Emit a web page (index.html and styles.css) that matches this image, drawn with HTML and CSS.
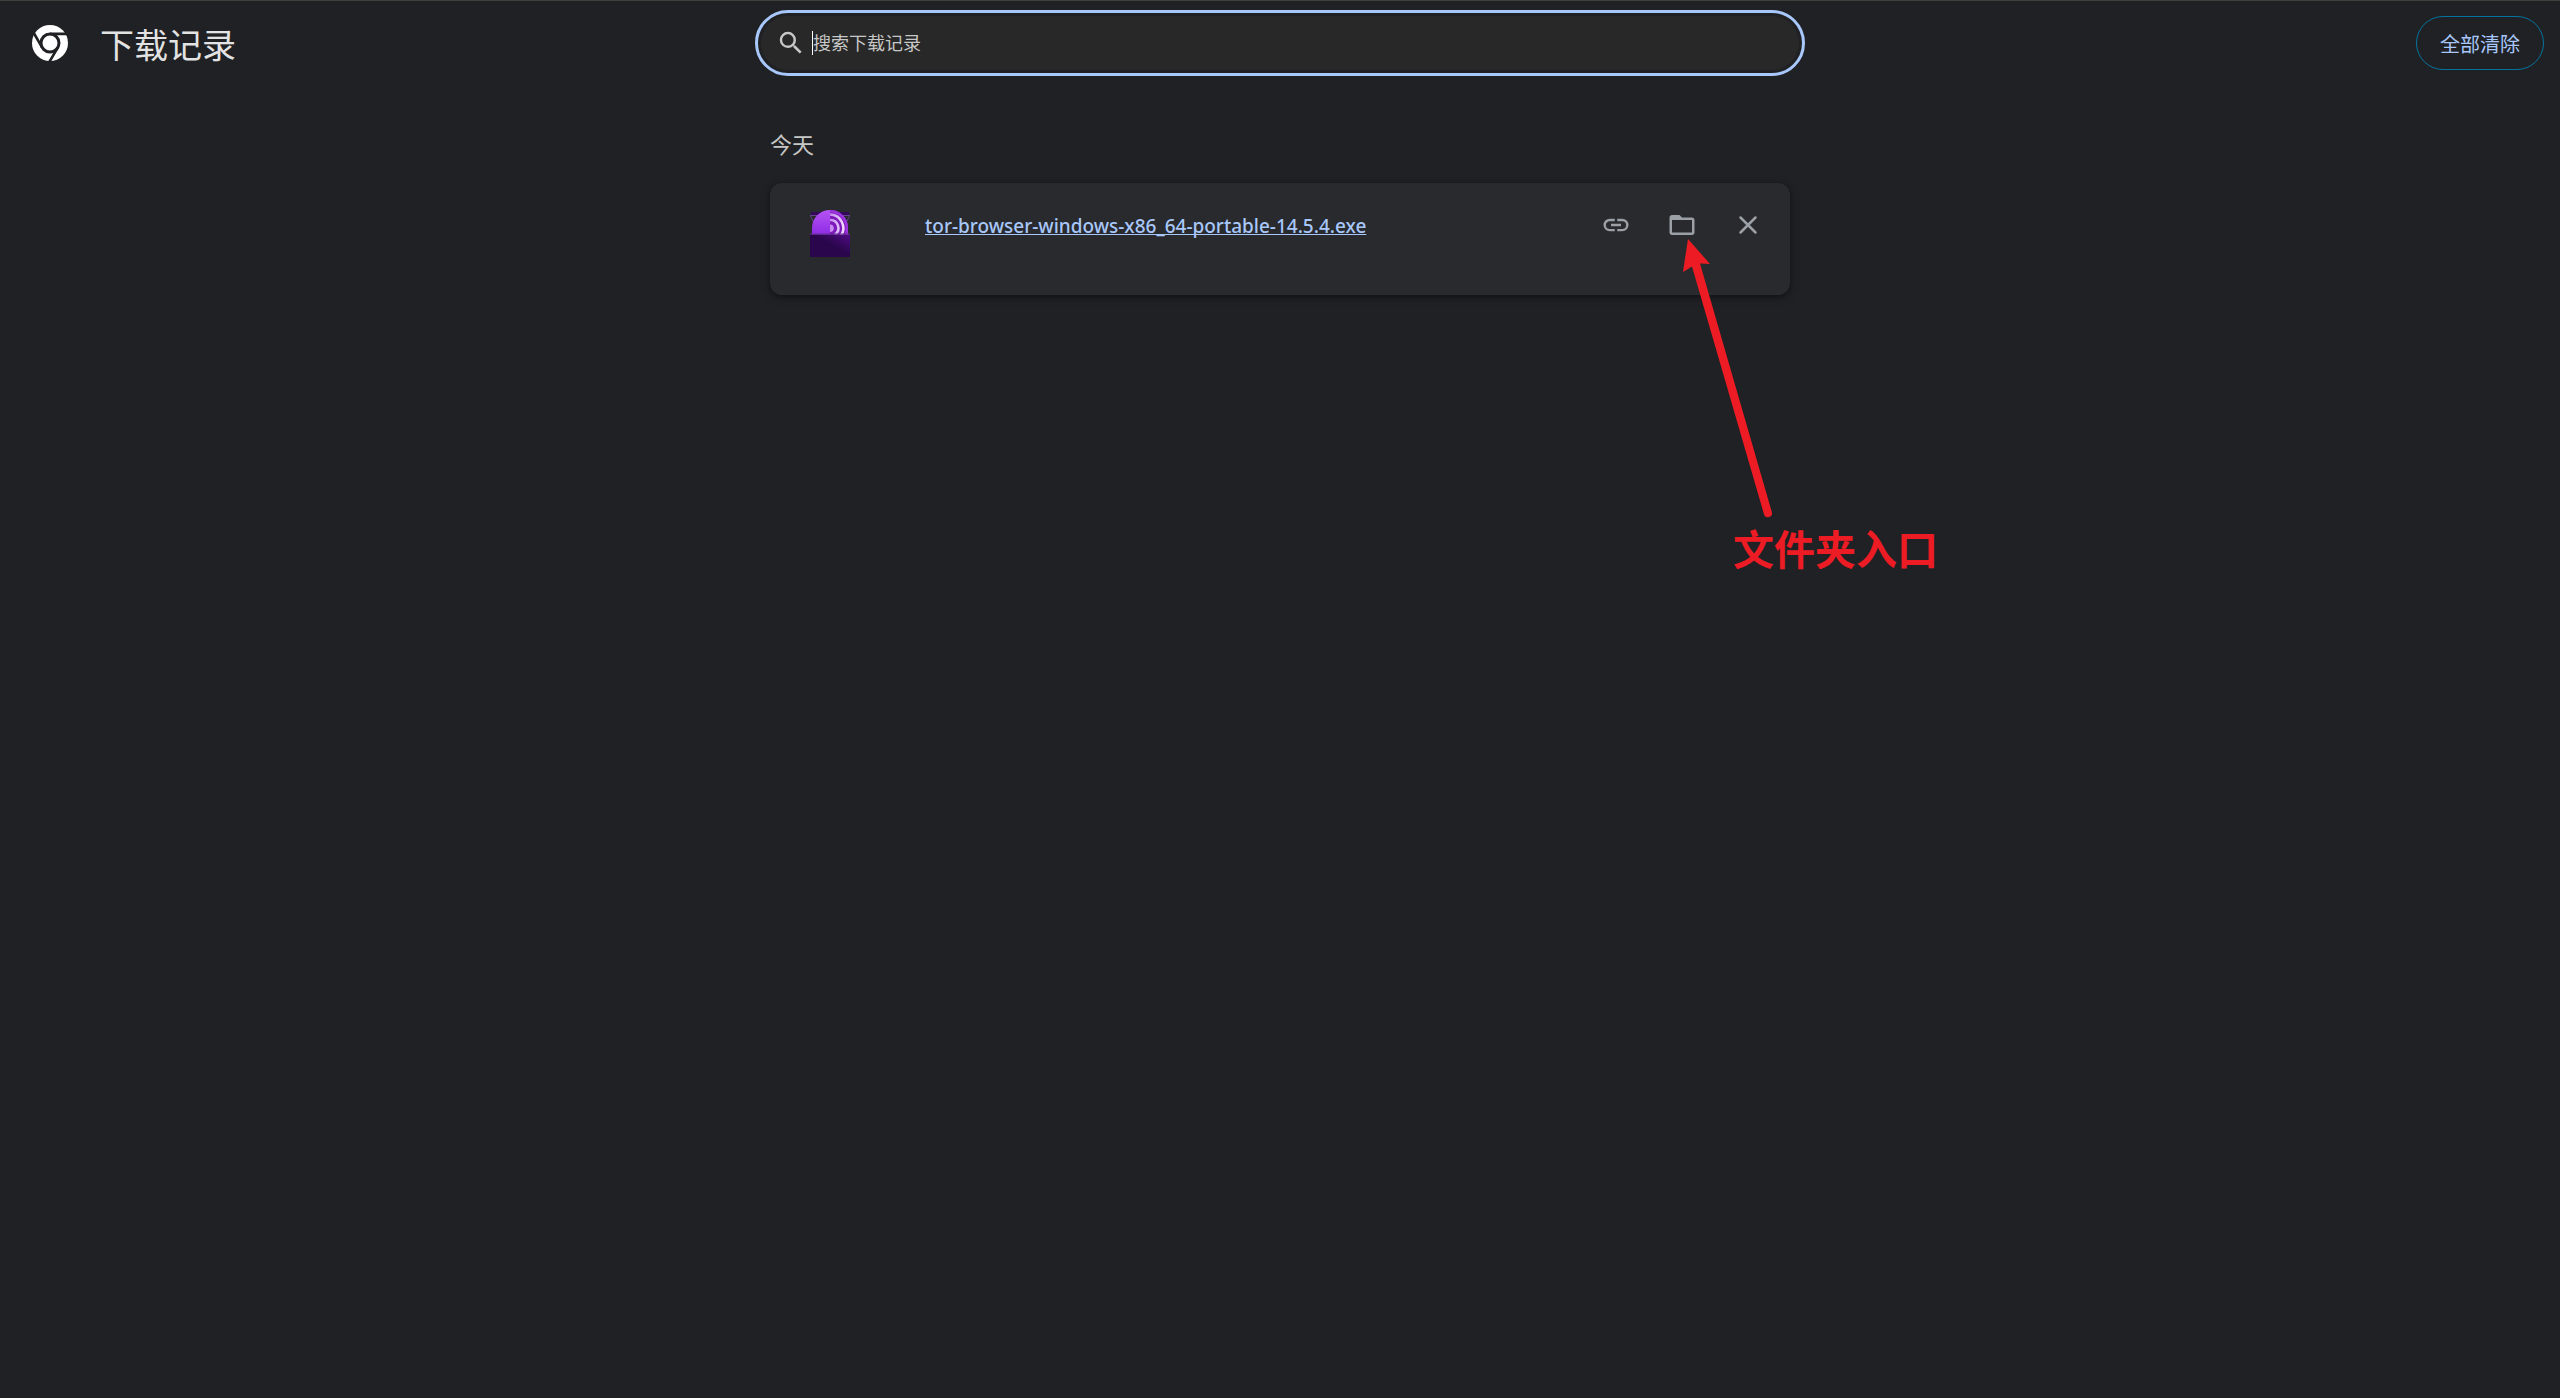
FILE: index.html
```html
<!DOCTYPE html>
<html lang="zh-CN">
<head>
<meta charset="utf-8">
<meta name="viewport" content="width=device-width, initial-scale=1">
<title>下载记录</title>
<link rel="stylesheet" href="styles.css">
</head>
<body>
<header class="toolbar">
  <div class="brand">
    <svg class="brand-logo" viewBox="0 0 36 36" aria-hidden="true">
      <circle cx="18" cy="18" r="18" fill="#fff"/>
      <circle cx="18" cy="18" r="9" fill="none" stroke="#202124" stroke-width="3"/>
      <path d="M18 8.9H35M10.2 22.6L1.8 8M25.8 22.6L17.3 37" fill="none" stroke="#202124" stroke-width="2.6"/>
    </svg>
    <h1 class="brand-title">下载记录</h1>
  </div>
  <div class="search">
    <div class="search-field">
      <svg class="search-icon" viewBox="0 0 24 24" aria-hidden="true"><path fill="currentColor" d="M15.5 14h-.79l-.28-.27A6.47 6.47 0 0 0 16 9.5 6.5 6.5 0 1 0 9.5 16c1.61 0 3.09-.59 4.23-1.57l.27.28v.79l5 4.99L20.49 19l-4.99-5zm-6 0C7.01 14 5 11.99 5 9.5S7.01 5 9.5 5 14 7.01 14 9.5 11.99 14 9.5 14z"/></svg>
      <span class="caret"></span>
      <input class="search-input" type="text" placeholder="搜索下载记录" aria-label="搜索下载记录">
    </div>
  </div>
  <div class="actions"><button class="clear-all" type="button">全部清除</button></div>
</header>
<main class="downloads">
  <h2 class="date">今天</h2>
  <article class="card">
    <svg class="file-icon" viewBox="0 0 40 48" aria-hidden="true">
      <defs>
        <linearGradient id="onion" x1="0" y1="0" x2="0" y2="1"><stop offset="0" stop-color="#b653f4"/><stop offset="1" stop-color="#8c2be4"/></linearGradient>
        <linearGradient id="box" x1="0" y1="1" x2="1" y2="0"><stop offset=".55" stop-color="#2a064d"/><stop offset="1" stop-color="#530b86"/></linearGradient>
        <linearGradient id="ring" x1="0" y1="0" x2="1" y2="0"><stop offset="0" stop-color="#c58bee"/><stop offset="1" stop-color="#f0d8ff"/></linearGradient>
      </defs>
      <path d="M1 2h38v4H1z" fill="#35075c"/>
      <path d="M0 5.5h40M.5 6l3 6v13M39.5 6l-3 6v13" fill="none" stroke="#64438a"/>
      <path d="M2 25V18a18 18 0 0 1 36 0v7z" fill="url(#onion)"/>
      <path d="M20 0a18 18 0 0 1 18 18v7H20z" fill="#7d19bb"/>
      <path d="M20 1.2a16.8 16.8 0 0 1 16.8 16.8v7" fill="none" stroke="#9c35df" stroke-width="2.4"/>
      <path d="M20 4.500a13.5 13.5 0 0 1 11 21M20 10a8 8 0 0 1 5 14.5" fill="none" stroke="url(#ring)" stroke-width="2.6"/>
      <path d="M20 14.500a3.8 3.8 0 0 1 0 7.600z" fill="#c58bee"/>
      <path d="M0 24.500h40V47H0z" fill="url(#box)"/>
      <path d="M0 24h40" stroke="#64348d"/>
    </svg>
    <div class="file-info"><a class="file-name" href="#">tor-browser-windows-x86_64-portable-14.5.4.exe</a></div>
    <div class="card-actions">
      <button class="icon-button" type="button" aria-label="复制下载链接"><svg class="icon" viewBox="0 0 24 24"><path fill="currentColor" d="M3.9 12c0-1.71 1.39-3.1 3.1-3.1h4V7H7a5 5 0 0 0 0 10h4v-1.900H7A3.100 3.100 0 0 1 3.900 12zM8 13h8v-2H8v2zm9-6h-4v1.900h4a3.100 3.100 0 0 1 0 6.200h-4V17h4a5 5 0 0 0 0-10z"/></svg></button>
      <button class="icon-button" type="button" aria-label="在文件夹中显示"><svg class="icon" viewBox="0 0 24 24"><path fill="currentColor" d="M20 6h-8l-2-2H4c-1.1 0-2 .9-2 2v12c0 1.1.9 2 2 2h16c1.1 0 2-.9 2-2V8c0-1.100-.9-2-2-2zm0 12H4V8h16v10z"/></svg></button>
      <button class="icon-button" type="button" aria-label="从列表中移除"><svg class="icon" viewBox="0 0 24 24"><path d="M6 6l12 12M18 6L6 18" fill="none" stroke="currentColor" stroke-width="2" stroke-linecap="round"/></svg></button>
    </div>
    <div class="note">
      <svg class="note-arrow" viewBox="0 0 100 282" aria-hidden="true">
        <path d="M5 1L27 26 17 25.500 88.800 274a4 4 0 0 1-7.800 2.200L9 28.500 0 34z" fill="#ed1c24"/>
      </svg>
      <span class="note-text">文件夹入口</span>
    </div>
  </article>
</main>
</body>
</html>
```
FILE: styles.css
```css
* {
  box-sizing: border-box;
}

body {
  margin: 0;
  min-height: 100vh;
  border-top: 1px solid #3c403c;
  background: #202124;
  color: #e3e3e3;
  font-family: "Noto Sans", "Noto Sans CJK SC", sans-serif;
}

button,
input {
  font-family: inherit;
}

.toolbar {
  display: grid;
  grid-template-columns: 1fr minmax(0, 1050px) 1fr;
  align-items: center;
  padding: 9px 16px;
}

.brand {
  display: flex;
  align-items: center;
  gap: 32px;
  min-width: 0;
  padding-left: 16px;
}

.brand-logo {
  width: 36px;
  height: 36px;
  flex: none;
}

.brand-title {
  margin: 0;
  padding-top: 4px;
  font-size: 34px;
  font-weight: 400;
  line-height: 48px;
  white-space: nowrap;
}

.search {
  padding: 3px;
  border: 3px solid #a8c7fa;
  border-radius: 33px;
}

.search-field {
  display: flex;
  align-items: center;
  height: 54px;
  padding: 0 15px;
  border-radius: 27px;
  background: #282828;
}

.search-icon {
  width: 30px;
  height: 30px;
  margin-right: 6px;
  flex: none;
  color: #c7c7c7;
}

.caret {
  width: 1px;
  height: 24px;
  background: #fff;
}

.search-input {
  flex: 1;
  min-width: 0;
  padding: 0;
  border: 0;
  outline: 0;
  background: transparent;
  color: #e3e3e3;
  font-size: 18px;
  line-height: 27px;
}

.search-input::placeholder {
  color: #c7c7c7;
  opacity: 1;
}

.actions {
  display: flex;
  justify-content: flex-end;
}

.clear-all {
  height: 54px;
  padding: 0 23px;
  border: 1px solid #04749f;
  border-radius: 27px;
  background: transparent;
  color: #a8c7fa;
  font-size: 20px;
  white-space: nowrap;
}

.downloads {
  max-width: 1020px;
  margin: 0 auto;
  padding-top: 44px;
}

.date {
  margin: 0 0 24px;
  color: #c7c7c7;
  font-size: 22px;
  font-weight: 400;
  line-height: 30px;
}

.card {
  position: relative;
  display: flex;
  align-items: flex-start;
  padding: 18px 18px 37px 40px;
  border-radius: 12px;
  background: #292a2d;
  box-shadow: 0 2px 4px rgba(0, 0, 0, .3), 0 2px 9px 2px rgba(0, 0, 0, .15);
}

.file-icon {
  width: 40px;
  height: 48px;
  margin-top: 9px;
  flex: none;
}

.file-info {
  flex: 1;
  min-width: 0;
  padding-left: 75px;
  line-height: 50px;
}

.file-name {
  color: #a8c7fa;
  font-size: 19px;
  font-weight: 500;
  text-decoration-thickness: 1px;
  text-decoration-skip-ink: none;
  text-underline-offset: 1px;
}

.card-actions {
  display: flex;
  gap: 18px;
}

.icon-button {
  display: grid;
  place-items: center;
  width: 48px;
  height: 48px;
  padding: 0;
  border: 0;
  border-radius: 50%;
  background: transparent;
  color: #9aa0a6;
}

.icon {
  width: 30px;
  height: 30px;
}

/* callout lying over the card, pointing at the folder button */
.note {
  position: absolute;
  top: 55px;
  right: -148px;
  display: flex;
  flex-direction: column;
  width: 255px;
  pointer-events: none;
}

.note-arrow {
  width: 100px;
  height: 282px;
}

.note-text {
  align-self: flex-end;
  color: #ed1c24;
  font-size: 41px;
  font-weight: 700;
  line-height: 58px;
  white-space: nowrap;
}
```
